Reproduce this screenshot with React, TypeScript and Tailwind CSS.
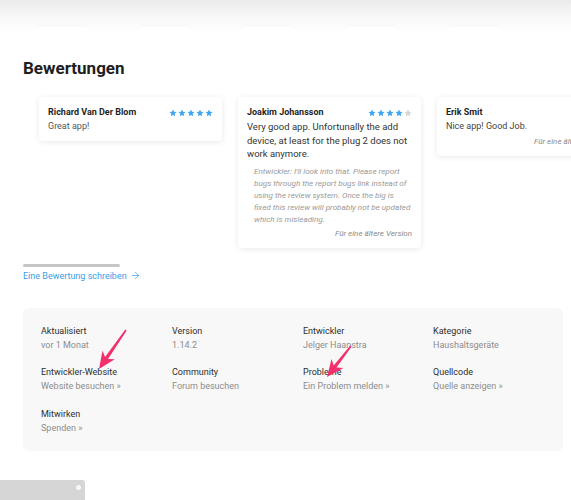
import { ArrowRight } from 'lucide-react'

const FONT = { fontFamily: 'Roboto, "Noto Sans", sans-serif' }

const INFO = [
  { label: 'Aktualisiert', value: 'vor 1 Monat' },
  { label: 'Version', value: '1.14.2' },
  { label: 'Entwickler', value: 'Jelger Haanstra' },
  { label: 'Kategorie', value: 'Haushaltsgeräte' },
  { label: 'Entwickler-Website', value: 'Website besuchen »' },
  { label: 'Community', value: 'Forum besuchen' },
  { label: 'Probleme', value: 'Ein Problem melden »' },
  { label: 'Quellcode', value: 'Quelle anzeigen »' },
  { label: 'Mitwirken', value: 'Spenden »' },
]

function Stars({ count }: { count: number }) {
  return (
    <div className="flex gap-[1px]">
      {[0, 1, 2, 3, 4].map((i) => (
        <svg key={i} width="8" height="8" viewBox="0 0 24 24">
          <polygon
            points="12,1.5 15.1,8.3 22.5,9.1 17,14.1 18.5,21.5 12,17.8 5.5,21.5 7,14.1 1.5,9.1 8.9,8.3"
            fill={i < count ? '#3ea6f2' : '#d4d4d4'}
          />
        </svg>
      ))}
    </div>
  )
}

function arrowPoints(sx: number, sy: number, tx: number, ty: number) {
  const dx = tx - sx
  const dy = ty - sy
  const len = Math.hypot(dx, dy)
  const ux = dx / len
  const uy = dy / len
  const nx = -uy
  const ny = ux
  const head = 17
  const hw = 7.5
  const sw = 1.8
  const jx = tx - ux * head * 0.78
  const jy = ty - uy * head * 0.78
  const bx = tx - ux * head
  const by = ty - uy * head
  const pts = [
    [sx + nx * sw * 0.5, sy + ny * sw * 0.5],
    [jx + nx * sw, jy + ny * sw],
    [bx + nx * hw, by + ny * hw],
    [tx, ty],
    [bx - nx * hw, by - ny * hw],
    [jx - nx * sw, jy - ny * sw],
    [sx - nx * sw * 0.5, sy - ny * sw * 0.5],
  ]
  return pts.map((p) => p.map((v) => v.toFixed(1)).join(',')).join(' ')
}

function Card({ name, stars, children }: { name: string; stars?: number; children: React.ReactNode }) {
  return (
    <div className="w-[183px] shrink-0 bg-white rounded-[4px] shadow-[0_1px_6px_rgba(0,0,0,0.09)] px-[9px] pt-[8px] pb-[8px]">
      <div className="flex items-center justify-between leading-[15px]">
        <span className="text-[9px] font-bold text-[#1f1f1f]">{name}</span>
        {stars !== undefined && <Stars count={stars} />}
      </div>
      {children}
    </div>
  )
}

export default function App() {
  return (
    <div className="relative w-[571px] h-[500px] overflow-hidden bg-white" style={FONT}>
      {/* top shadow with tabs */}
      <div className="h-[33px] bg-gradient-to-b from-[#ebebeb] via-[#f8f8f8] to-white flex items-end pl-[34px] gap-[47px]">
        {[0, 1, 2, 3, 4].map((i) => (
          <div key={i} className="w-[56px] h-[6px] bg-white rounded-t-[6px] shadow-[0_-2px_4px_rgba(0,0,0,0.02)]" />
        ))}
      </div>

      <h2 className="ml-[23px] mt-[25px] text-[17px] leading-[20px] font-bold text-[#1e1e1e]">Bewertungen</h2>

      {/* reviews scroller */}
      <div className="ml-[23px] mt-[15px] overflow-hidden pt-[4px] pb-[12px] pl-[16px]">
        <div className="flex items-start gap-[16px]">
          <Card name="Richard Van Der Blom" stars={5}>
            <p className="text-[9px] leading-[13px] text-[#555]">Great app!</p>
          </Card>
          <Card name="Joakim Johansson" stars={4}>
            <p className="text-[9.5px] leading-[13.5px] text-[#333]">
              Very good app. Unfortunally the add device, at least for the plug 2 does not work anymore.
            </p>
            <p className="mt-[4px] pl-[7px] text-[8.1px] leading-[12.2px] italic text-[#9a9a9a] whitespace-nowrap">
              Entwickler: I'll look into that. Please report
              <br />
              bugs through the report bugs link instead of
              <br />
              using the review system. Once the big is
              <br />
              fixed this review will probably not be updated
              <br />
              which is misleading.
            </p>
            <p className="mt-[2px] text-right text-[8px] leading-[12px] italic text-[#8a8a8a]">Für eine ältere Version</p>
          </Card>
          <Card name="Erik Smit">
            <p className="text-[9px] leading-[13px] text-[#444]">Nice app! Good Job.</p>
            <p className="mt-[3px] text-right text-[8px] leading-[12px] italic text-[#8a8a8a]">Für eine ältere Version</p>
          </Card>
        </div>
      </div>

      {/* scrollbar */}
      <div className="ml-[23px] mt-[4px] w-[97px] h-[3px] rounded-full bg-[#c6c6c6]" />

      <a className="ml-[23px] mt-[2px] flex items-center gap-[3px] text-[9px] leading-[14px] text-[#3a9ee6]">
        Eine Bewertung schreiben
        <ArrowRight size={11} strokeWidth={1.6} />
      </a>

      {/* info panel */}
      <div className="ml-[23px] mt-[25px] w-[540px] rounded-[6px] bg-[#f8f8f8] pl-[18px] pt-[16px] pb-[16px]">
        <div className="grid grid-cols-[131px_131px_130px_1fr] gap-y-[13.5px]">
          {INFO.map((item) => (
            <div key={item.label} className="text-[9px] leading-[14px]">
              <div className="text-[#2e2e2e]">{item.label}</div>
              <div className="text-[#8c8c8c]">{item.value}</div>
            </div>
          ))}
        </div>
      </div>

      {/* bottom left widget */}
      <div className="mt-[29px] w-[85px] h-[20px] bg-[#d6d6d6] rounded-tr-[3px] flex justify-end items-start pt-[5px] pr-[4px]">
        <div className="w-[5px] h-[5px] rounded-full bg-[#f4f4f4] border border-white" />
      </div>

      {/* annotation arrows */}
      <svg className="absolute inset-0 pointer-events-none" width="571" height="500">
        <polygon points={arrowPoints(126, 330, 99, 369)} fill="#f4306c" />
        <polygon points={arrowPoints(351, 346, 327, 377)} fill="#f4306c" />
      </svg>
    </div>
  )
}
